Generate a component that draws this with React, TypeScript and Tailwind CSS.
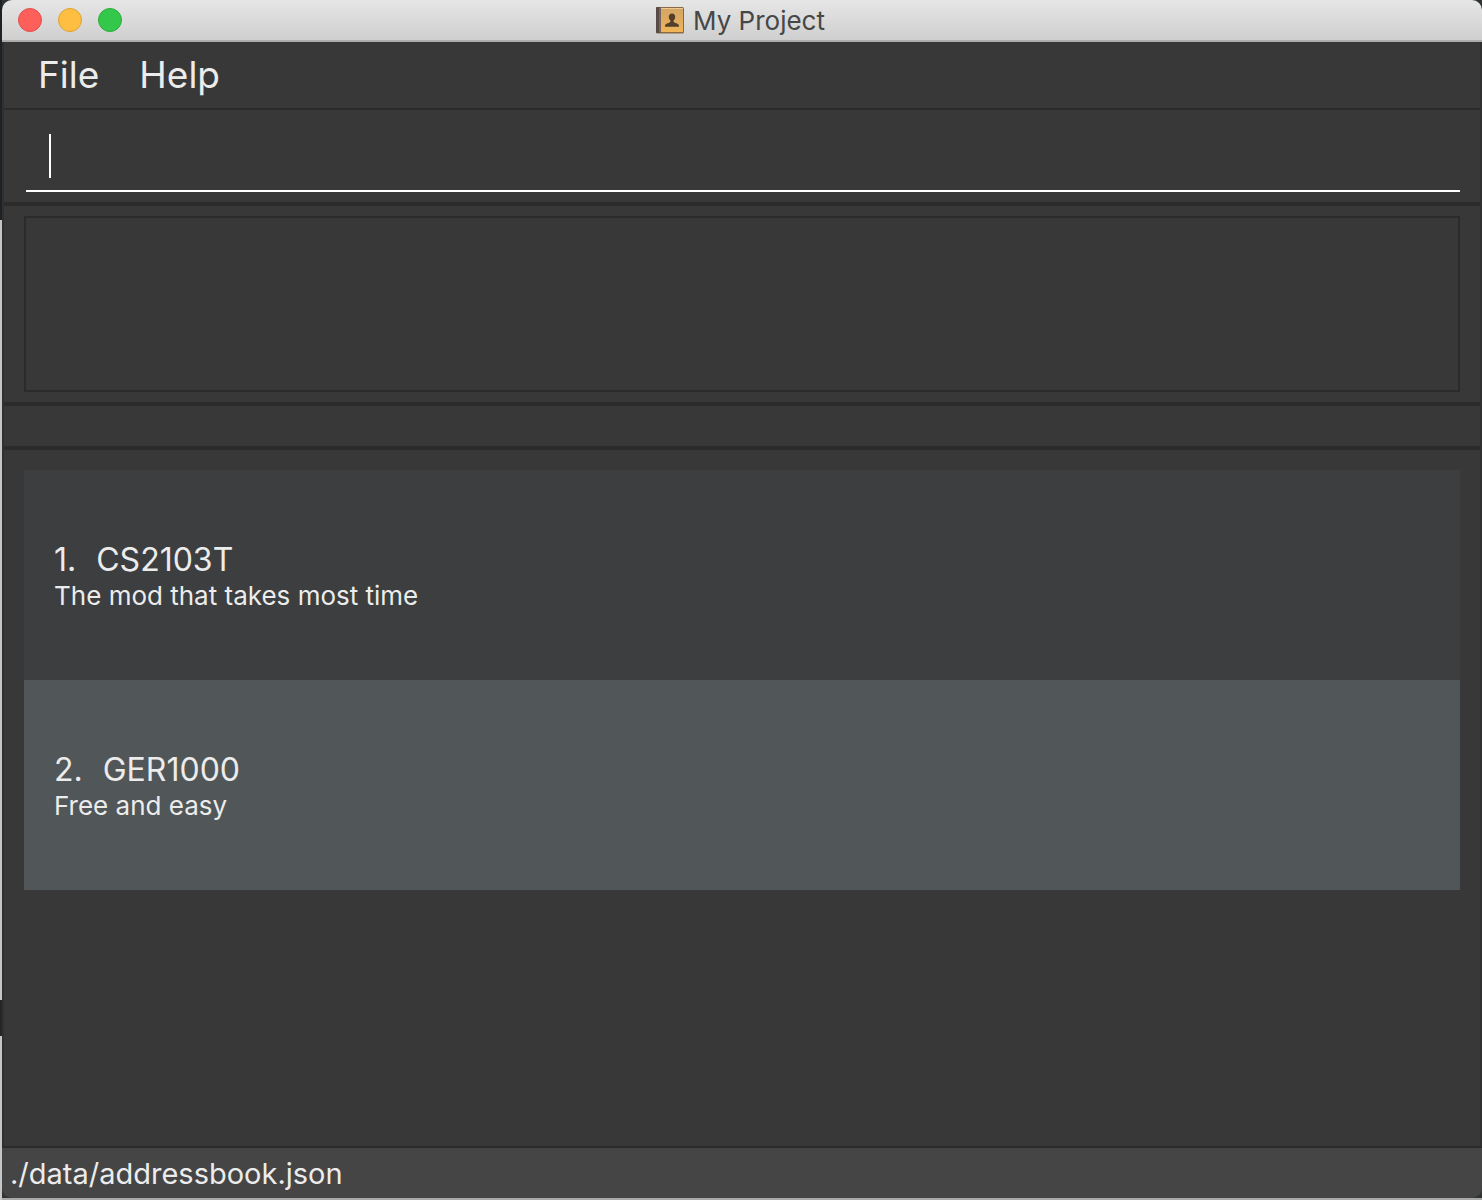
const modules = [
  { id: 1, name: "CS2103T", note: "The mod that takes most time" },
  { id: 2, name: "GER1000", note: "Free and easy" },
];

function BookIcon() {
  return (
    <svg width="30" height="28" viewBox="0 0 30 28" aria-hidden="true">
      <defs>
        <linearGradient id="cover" x1="0" y1="0" x2="0" y2="1">
          <stop offset="0" stopColor="#d3a668" />
          <stop offset="0.5" stopColor="#dfab5d" />
          <stop offset="1" stopColor="#f0b658" />
        </linearGradient>
      </defs>
      <rect x="1" y="1" width="28" height="26.500" rx="1.500" fill="#8a6a42" />
      <rect x="1" y="1" width="5" height="26" rx="1" fill="#584b47" />
      <rect x="4.500" y="1.500" width="1" height="25" fill="#8d817a" />
      <rect x="6" y="2" width="22" height="24" fill="url(#cover)" />
      <path d="M6 2.500h22" stroke="#ecc895" strokeWidth="1" />
      <path
        d="M17 7.500c-2 0-3.200 1.300-3.200 3.300 0 1.700.7 2.900 1.600 3.700v1.300c-.5 1.300-5.400 1.500-5.400 4.200v.7h14v-.7c0-2.700-4.900-2.900-5.400-4.200v-1.300c.9-.8 1.600-2 1.600-3.700 0-2-1.200-3.300-3.200-3.300z"
        fill="#513f2b"
      />
    </svg>
  );
}

export default function App() {
  return (
    <div className="flex min-h-screen bg-[#a9a9a9] font-['Inter','Liberation_Sans',sans-serif] text-[#ececec]">
      <div className="flex w-[2px] shrink-0 flex-col">
        <div className="h-[220px] bg-[#1c2225]" />
        <div className="h-[780px] bg-[#c4c6c8]" />
        <div className="h-[36px] bg-[#222629]" />
        <div className="flex-1 bg-[#c4c6c8]" />
      </div>
      <div className="flex min-w-0 flex-1 flex-col border-b-2 border-[#a9a9a9] bg-[#303234]">
        <div className="flex min-w-0 flex-1 flex-col overflow-hidden rounded-[10px] bg-[#383838]">
          <header className="relative flex h-[42px] shrink-0 items-center justify-center border-b-2 border-[#adadad] bg-linear-to-b from-[#e6e6e6] to-[#cfcfcf]">
            <div className="absolute left-4 flex gap-4">
              <button aria-label="Close" className="size-6 rounded-full border border-[#e2504c] bg-[#fd5f5a]" />
              <button aria-label="Minimize" className="size-6 rounded-full border border-[#dfa033] bg-[#fdbe41]" />
              <button aria-label="Zoom" className="size-6 rounded-full border border-[#2bac3a] bg-[#34c84a]" />
            </div>
            <h1 className="flex items-center gap-2 pr-1 text-[26px] leading-8 text-[#474747]">
              <BookIcon />
              <span className="pt-px">My Project</span>
            </h1>
          </header>

          <div className="flex flex-1 flex-col border-x-2 border-[#303030]">
            <nav className="flex h-[68px] shrink-0 items-center gap-10 border-b-2 border-[#2b2b2b] pl-[34px] text-[37px] leading-10">
              <button>File</button>
              <button>Help</button>
            </nav>

            <div className="h-24 shrink-0 border-b-4 border-[#2b2b2b] pt-5 pr-5 pl-[22px]">
              <input
                autoFocus
                aria-label="Command"
                className="block h-[62px] w-full border-b-2 border-white bg-transparent px-6 text-[36px] text-white caret-transparent outline-none"
              />
              <div className="pointer-events-none relative">
                <span className="absolute bottom-[14px] left-[23px] h-11 w-[2px] bg-white" />
              </div>
            </div>

            <div className="shrink-0 border-b-4 border-[#2b2b2b] px-5 py-[10px]">
              <output aria-label="Result" className="block h-44 border-2 border-[#2b2b2b]" />
            </div>
            <div className="h-11 shrink-0 border-b-4 border-[#2b2b2b]" />

            <main className="flex-1 px-5 py-5">
              <ol>
                {modules.map((m) => (
                  <li
                    key={m.id}
                    className="flex h-[210px] flex-col justify-center bg-[#3c3e3f] px-[30px] pt-px even:bg-[#515658]"
                  >
                    <h2 className="flex gap-5 text-[32px] leading-10">
                      <span>{m.id}.</span>
                      <span>{m.name}</span>
                    </h2>
                    <p className="text-[26px] leading-8">{m.note}</p>
                  </li>
                ))}
              </ol>
            </main>
          </div>

          <footer className="h-[52px] shrink-0 border-t-2 border-[#2b2b2b] bg-[#454545] px-2 text-[29px] leading-[52px]">
            ./data/addressbook.json
          </footer>
        </div>
      </div>
    </div>
  );
}
